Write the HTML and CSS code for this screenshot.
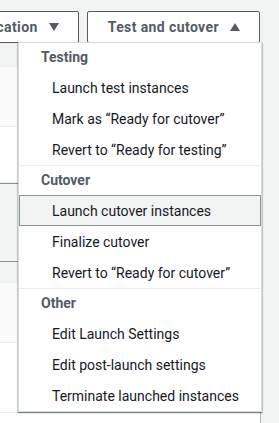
FILE: index.html
```html
<!DOCTYPE html>
<html>
<head>
    <meta charset="UTF-8">
    <title>Test and cutover</title>
    <link rel="stylesheet" href="styles.css">
</head>
<body>
<div class="toolbar">
    <button class="btn">Replication
        <svg class="caret" width="10" height="8" viewBox="0 0 10 8"><path d="M0 0H10L5 8Z"/></svg>
    </button>
    <button class="btn">Test and cutover
        <svg class="caret" width="10" height="8" viewBox="0 0 10 8"><path d="M0 8H10L5 0Z"/></svg>
    </button>
</div>

<div class="panel">
    <div class="row head"></div>
    <div class="row soft"></div>
    <div class="row"></div>
    <div class="row selected"></div>
    <div class="row head short"></div>
    <div class="row soft"></div>
    <div class="row tall"></div>
</div>

<div class="menu">
    <div class="group">
        <div class="group-title">Testing</div>
        <ul>
            <li>Launch test instances</li>
            <li>Mark as “Ready for cutover”</li>
            <li>Revert to “Ready for testing”</li>
        </ul>
    </div>
    <div class="group">
        <div class="group-title">Cutover</div>
        <ul>
            <li class="active">Launch cutover instances</li>
            <li>Finalize cutover</li>
            <li>Revert to “Ready for cutover”</li>
        </ul>
    </div>
    <div class="group">
        <div class="group-title">Other</div>
        <ul>
            <li>Edit Launch Settings</li>
            <li>Edit post-launch settings</li>
            <li>Terminate launched instances</li>
        </ul>
    </div>
</div>
</body>
</html>
```

FILE: styles.css
```css
* {
    margin: 0;
    padding: 0;
    box-sizing: border-box;
}

ul, li {
    list-style: none;
}

body {
    position: relative;
    width: 279px;
    height: 423px;
    overflow: hidden;
    background: #f2f3f3;
    font-family: Roboto, "Liberation Sans", sans-serif;
    font-size: 14px;
    color: #16191f;
}

.toolbar {
    display: flex;
    justify-content: flex-end;
    gap: 8px;
    padding: 11px 19px 0 0;
    height: 43px;
}

.btn {
    display: flex;
    align-items: center;
    gap: 11px;
    flex-shrink: 0;
    height: 32px;
    padding: 0 19px 0 20px;
    background: #fff;
    border: 1px solid #545b64;
    border-radius: 2px;
    font-family: inherit;
    font-size: 14px;
    font-weight: bold;
    letter-spacing: .4px;
    color: #545b64;
}

.caret {
    fill: #545b64;
    margin-top: -1px;
}

/* table behind the menu */
.panel {
    margin-right: 18px;
    background: #fff;
    border-right: 1px solid #aab7b8;
    height: 380px;
}

.row {
    height: 56px;
    border-bottom: 1px solid #eaeded;
}

.row.head {
    height: 24px;
    background: #f2f3f3;
    border-top: 1px solid #eaeded;
}

.row.soft {
    height: 60px;
    background: #fafafa;
}

.row.selected {
    height: 79px;
    background: #f2f3f3;
    border-top: 1px solid #879596;
    border-bottom: 1px solid #879596;
}

.row.short {
    height: 21px;
    border-top: 0;
}

.row.tall {
    height: 70px;
}

/* dropdown */
.menu {
    position: absolute;
    left: 18px;
    top: 42px;
    width: 244px;
    background: #fff;
    border: 1px solid #d5dbdb;
    box-shadow: 0 1px 1px 0 rgba(0, 28, 36, .3), 1px 1px 1px 0 rgba(0, 28, 36, .15), -1px 1px 1px 0 rgba(0, 28, 36, .15);
}

.group + .group {
    border-top: 1px solid #eaeded;
}

.group-title {
    height: 29px;
    line-height: 29px;
    padding-left: 22px;
    font-weight: bold;
    color: #545b64;
}

.group li {
    height: 31px;
    line-height: 31px;
    padding-left: 33px;
    white-space: nowrap;
    border: 1px solid transparent;
    border-left: 0;
    border-right: 0;
}

.group li.active {
    background: #f2f3f3;
    border: 1px solid #879596;
    padding-left: 32px;
}
```
